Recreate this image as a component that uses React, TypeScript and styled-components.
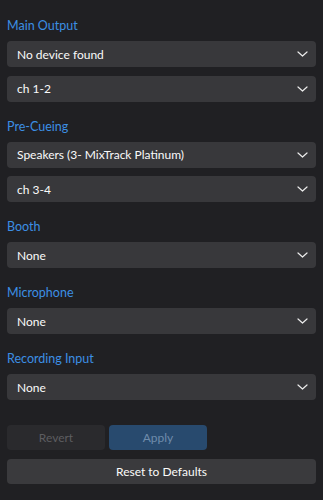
import React from 'react';
import styled, { createGlobalStyle } from 'styled-components';

const GlobalStyle = createGlobalStyle`
  html, body {
    margin: 0;
    padding: 0;
    background: #202023;
  }
  body {
    font-family: Lato, "Noto Sans", sans-serif;
  }
`;

const groups = [
  { title: 'Main Output', selects: ['No device found', 'ch 1-2'] },
  { title: 'Pre-Cueing', selects: ['Speakers (3- MixTrack Platinum)', 'ch 3-4'] },
  { title: 'Booth', selects: ['None'] },
  { title: 'Microphone', selects: ['None'] },
  { title: 'Recording Input', selects: ['None'] },
];

const Chevron = () => (
  <svg width="11" height="6" viewBox="0 0 11 6" fill="none">
    <path d="M1 1 L5.5 5 L10 1" stroke="#ececec" strokeWidth="1.2" strokeLinecap="round" strokeLinejoin="round" />
  </svg>
);

const App: React.FC = () => {
  return (
    <>
      <GlobalStyle />
      <Panel>
        {groups.map(group => (
          <Group key={group.title}>
            <Label>{group.title}</Label>
            <SelectList>
              {group.selects.map(value => (
                <Select key={value}>
                  <span>{value}</span>
                  <Chevron />
                </Select>
              ))}
            </SelectList>
          </Group>
        ))}

        {/* footer buttons */}
        <Footer>
          <ButtonRow>
            <Button variant="disabled">Revert</Button>
            <Button variant="accent">Apply</Button>
          </ButtonRow>
          <Button variant="normal" wide>
            Reset to Defaults
          </Button>
        </Footer>
      </Panel>
    </>
  );
};

export default App;

/*** style ***/
const Panel = styled.div`
  width: 323px;
  height: 500px;
  box-sizing: border-box;
  padding: 16px 7px 0;
  display: flex;
  flex-direction: column;
  gap: 15px;
`;

const Group = styled.div`
  display: flex;
  flex-direction: column;
  gap: 5px;
`;

const Label = styled.div`
  height: 20px;
  line-height: 20px;
  font-size: 12.5px;
  color: #3c8fe4;
`;

const SelectList = styled.div`
  display: flex;
  flex-direction: column;
  gap: 8.5px;
`;

const Select = styled.div`
  height: 26px;
  box-sizing: border-box;
  padding: 0 8px 0 10px;
  background: #38383b;
  border-radius: 4px;
  display: flex;
  align-items: center;
  justify-content: space-between;
  font-size: 12px;
  color: #fafafa;
`;

const Footer = styled.div`
  margin-top: 10px;
  display: flex;
  flex-direction: column;
  gap: 9px;
`;

const ButtonRow = styled.div`
  display: flex;
  gap: 4px;
`;

const Button = styled.div<{ variant: 'disabled' | 'accent' | 'normal'; wide?: boolean }>`
  width: ${p => (p.wide ? '100%' : '98px')};
  height: 25px;
  border-radius: 4px;
  display: flex;
  align-items: center;
  justify-content: center;
  font-size: 12px;
  background: ${p =>
    p.variant === 'accent' ? '#284a6e' : p.variant === 'disabled' ? '#2a2a2d' : '#3a3a3d'};
  color: ${p =>
    p.variant === 'accent' ? '#6f8cab' : p.variant === 'disabled' ? '#5d5d60' : '#fafafa'};
`;
